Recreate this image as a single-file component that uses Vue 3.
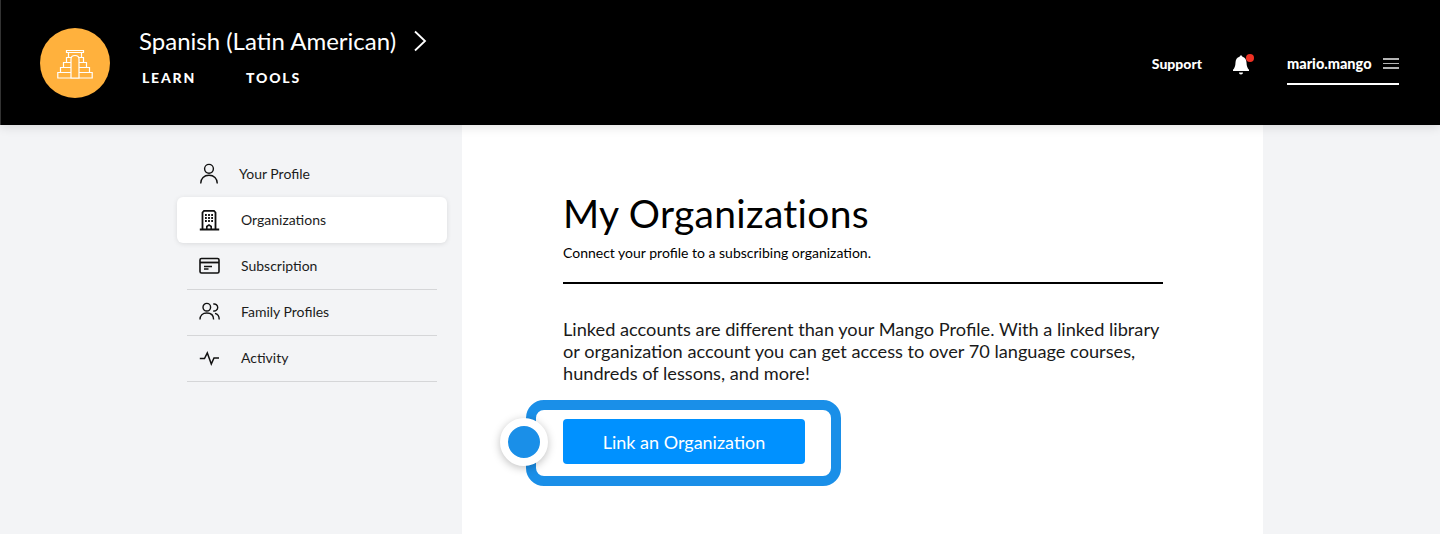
<script setup>
const menu = [
  { label: 'Your Profile', icon: 'profile' },
  { label: 'Organizations', icon: 'org', active: true },
  { label: 'Subscription', icon: 'card', line: true },
  { label: 'Family Profiles', icon: 'family', line: true },
  { label: 'Activity', icon: 'activity', line: true },
];
</script>

<template>
  <div class="page">
    <header class="topbar">
      <div class="logo">
        <svg width="36" height="30" viewBox="0 0 36 30" fill="none" stroke="#fff" stroke-width="1.2">
          <path d="M9.5 1.5h17v2h-17zM11.5 3.500v5M24.500 3.500v5M9.500 8.500h17v5h-17zM6.500 13.500h23v5h-23zM3.500 18.500h29v5h-29zM.8 23.500h34.400v5.500H.8z" />
          <path d="M14 29V10c0-2 1.500-3.500 4-3.500s4 1.500 4 3.500v19z" fill="#ffb13d" />
        </svg>
      </div>
      <div class="course">
        <div class="course-name">
          <span>Spanish (Latin American)</span>
          <svg width="14" height="22" viewBox="0 0 14 22" fill="none" stroke="#fff" stroke-width="1.800"><path d="M2 1.500 12 11 2 20.500" /></svg>
        </div>
        <nav class="course-nav">
          <span>LEARN</span>
          <span>TOOLS</span>
        </nav>
      </div>
      <div class="account">
        <span class="support">Support</span>
        <span class="bell">
          <svg width="20" height="22" viewBox="0 0 20 22" fill="#fff">
            <path d="M10 1.500c.8 0 1.300.5 1.400 1.200 2.700.7 4 2.900 4.100 5.800.1 3.700.9 5.500 2.500 7.200v1.300H2v-1.300c1.600-1.700 2.400-3.500 2.500-7.200.1-2.900 1.400-5.100 4.100-5.800.1-.7.600-1.200 1.400-1.200zM8 18.500h4c0 1.300-.8 2-2 2s-2-.7-2-2z" />
          </svg>
          <i class="bell-dot"></i>
        </span>
        <div class="user">
          <span>mario.mango</span>
          <span class="burger"><i></i><i></i><i></i></span>
        </div>
      </div>
    </header>

    <div class="body">
      <aside class="side">
        <a v-for="item in menu" :key="item.label" class="side-item" :class="{ active: item.active, line: item.line, first: item.icon === 'profile' }">
          <svg class="side-icon" width="22" height="22" viewBox="0 0 22 22" fill="none" stroke="#111" stroke-width="1.400">
            <template v-if="item.icon === 'profile'">
              <circle cx="10" cy="5.800" r="4.400" />
              <path d="M1.700 20.500c0-5 3.400-8.200 8.300-8.200s8.300 3.200 8.300 8.200" />
            </template>
            <template v-else-if="item.icon === 'org'">
              <path d="M3.500 20.500V3.500l1.500-1.600h10l1.500 1.600v17M.8 20.500h19.400" stroke-width="1.800" />
              <path d="M7.800 20.500v-3l2.200-1.600 2.200 1.600v3" stroke-width="1.600" />
              <path d="M6 6h1.800M9.100 6h1.800M12.200 6H14M6 9h1.800M9.100 9h1.800M12.200 9H14M6 12h1.800M9.100 12h1.800M12.200 12H14" stroke-width="1.800" />
            </template>
            <template v-else-if="item.icon === 'card'">
              <rect x="1" y="3.500" width="19" height="14.500" rx="1.500" stroke-width="1.600" />
              <path d="M1 7.500h19" stroke-width="1.800" />
              <path d="M5 11.500h8M5 14h4.500" />
            </template>
            <template v-else-if="item.icon === 'family'">
              <circle cx="7.800" cy="6.200" r="3.800" />
              <path d="M1 18.500c0-4 2.700-6.500 6.800-6.500s6.800 2.500 6.800 6.500" />
              <path d="M14.200 3.100a3.500 3.500 0 1 1 0 6.700M16 12.400c2.600.6 4.200 2.800 4.200 6.100" />
            </template>
            <template v-else>
              <path d="M.8 11.500h4.700l2.800-5.500 4 11 2.700-6h5" stroke-width="1.500" />
            </template>
          </svg>
          <span>{{ item.label }}</span>
        </a>
      </aside>

      <main class="main">
        <div class="panel">
          <h1>My Organizations</h1>
          <p class="sub">Connect your profile to a subscribing organization.</p>
          <hr />
          <p class="intro">Linked accounts are different than your Mango Profile. With a linked library or organization account you can get access to over 70 language courses, hundreds of lessons, and more!</p>
          <div class="action">
            <button>Link an Organization</button>
            <div class="focus-ring"></div>
            <div class="focus-dot"></div>
          </div>
        </div>
      </main>
    </div>
  </div>
</template>

<style>
html, body {
  margin: 0;
  background: #f3f4f6;
}
</style>

<style scoped>
.page {
  height: 534px;
  overflow: hidden;
  font-family: Lato, "Open Sans", sans-serif;
  color: #000;
}
.topbar {
  position: relative;
  z-index: 1;
  height: 125px;
  background: #000;
  display: flex;
  align-items: flex-start;
  padding: 0 41px 0 39px;
  border-left: 1px solid #333;
  box-sizing: border-box;
  color: #fff;
  box-shadow: 0 2px 10px rgba(0, 0, 0, 0.12);
}
.logo {
  width: 70px;
  height: 70px;
  margin-top: 28px;
  border-radius: 50%;
  background: #ffb13d;
  display: flex;
  align-items: center;
  justify-content: center;
}
.logo svg {
  margin-top: 1px;
}
.course {
  margin-left: 29px;
  padding-top: 27px;
}
.course-name {
  display: flex;
  align-items: center;
  gap: 17px;
  font-size: 24px;
  line-height: 28px;
}
.course-nav {
  display: flex;
  gap: 50px;
  margin-top: 15px;
  margin-left: 3px;
  font-size: 14px;
  line-height: 16px;
  font-weight: 900;
  letter-spacing: 1.800px;
}
.account {
  margin-left: auto;
  display: flex;
  align-items: flex-start;
  font-size: 14px;
  font-weight: 900;
}
.support {
  margin-top: 55px;
  line-height: 17px;
}
.bell {
  position: relative;
  margin: 54px 0 0 29px;
  width: 20px;
  height: 22px;
}
.bell-dot {
  position: absolute;
  top: 0;
  left: 15px;
  width: 8px;
  height: 8px;
  border-radius: 50%;
  background: #ef3124;
}
.user {
  margin: 55px 0 0 36px;
  width: 112px;
  height: 30px;
  box-sizing: border-box;
  border-bottom: 2px solid #fff;
  display: flex;
  justify-content: space-between;
  font-size: 14.500px;
  line-height: 17px;
}
.burger {
  display: flex;
  flex-direction: column;
  gap: 3px;
  width: 16px;
  margin-top: 3px;
}
.burger i {
  height: 1.500px;
  background: #b4b4b4;
}
.body {
  display: flex;
  height: 409px;
}
.side {
  width: 270px;
  margin: 26px 15px 0 177px;
}
.side-item {
  height: 46px;
  display: flex;
  align-items: center;
  padding-left: 22px;
  font-size: 14px;
  color: #1c1c1c;
  position: relative;
}
.side-item span {
  padding-bottom: 2px;
}
.side-item.first span {
  margin-left: -2px;
}
.side-item.active {
  background: #fff;
  border-radius: 6px;
  box-shadow: 0 1px 5px rgba(0, 0, 0, 0.1);
}
.side-item.line::after {
  content: '';
  position: absolute;
  left: 10px;
  right: 10px;
  bottom: -1px;
  height: 1px;
  background: #d5d6d8;
}
.side-icon {
  margin-right: 20px;
  flex: none;
}
.main {
  width: 801px;
  background: #fff;
}
.panel {
  width: 600px;
  margin-left: 101px;
  padding-top: 63px;
}
h1 {
  margin: 0;
  font-size: 39px;
  line-height: 50px;
  font-weight: 400;
  letter-spacing: 0.300px;
}
.sub {
  margin: 6px 0 0;
  font-size: 14px;
  line-height: 18px;
}
hr {
  margin: 20px 0 0;
  border: none;
  height: 2px;
  background: #000;
}
.intro {
  margin: 34px 0 0;
  font-size: 18.200px;
  line-height: 22px;
  color: #1a1a1a;
}
.action {
  position: relative;
  margin-top: 35px;
}
button {
  display: block;
  width: 242px;
  height: 45px;
  border: none;
  border-radius: 4px;
  background: #0091ff;
  color: #fff;
  font-family: inherit;
  font-size: 18px;
}
.focus-ring {
  position: absolute;
  left: -37px;
  top: -19px;
  width: 315px;
  height: 86px;
  box-sizing: border-box;
  border: 10px solid #1a8fe8;
  border-radius: 18px;
}
.focus-dot {
  position: absolute;
  left: -63px;
  top: -1px;
  width: 32px;
  height: 32px;
  border: 8px solid #fff;
  border-radius: 50%;
  background: #1a8fe8;
  box-shadow: 0 2px 8px rgba(0, 0, 0, 0.25);
}
</style>
